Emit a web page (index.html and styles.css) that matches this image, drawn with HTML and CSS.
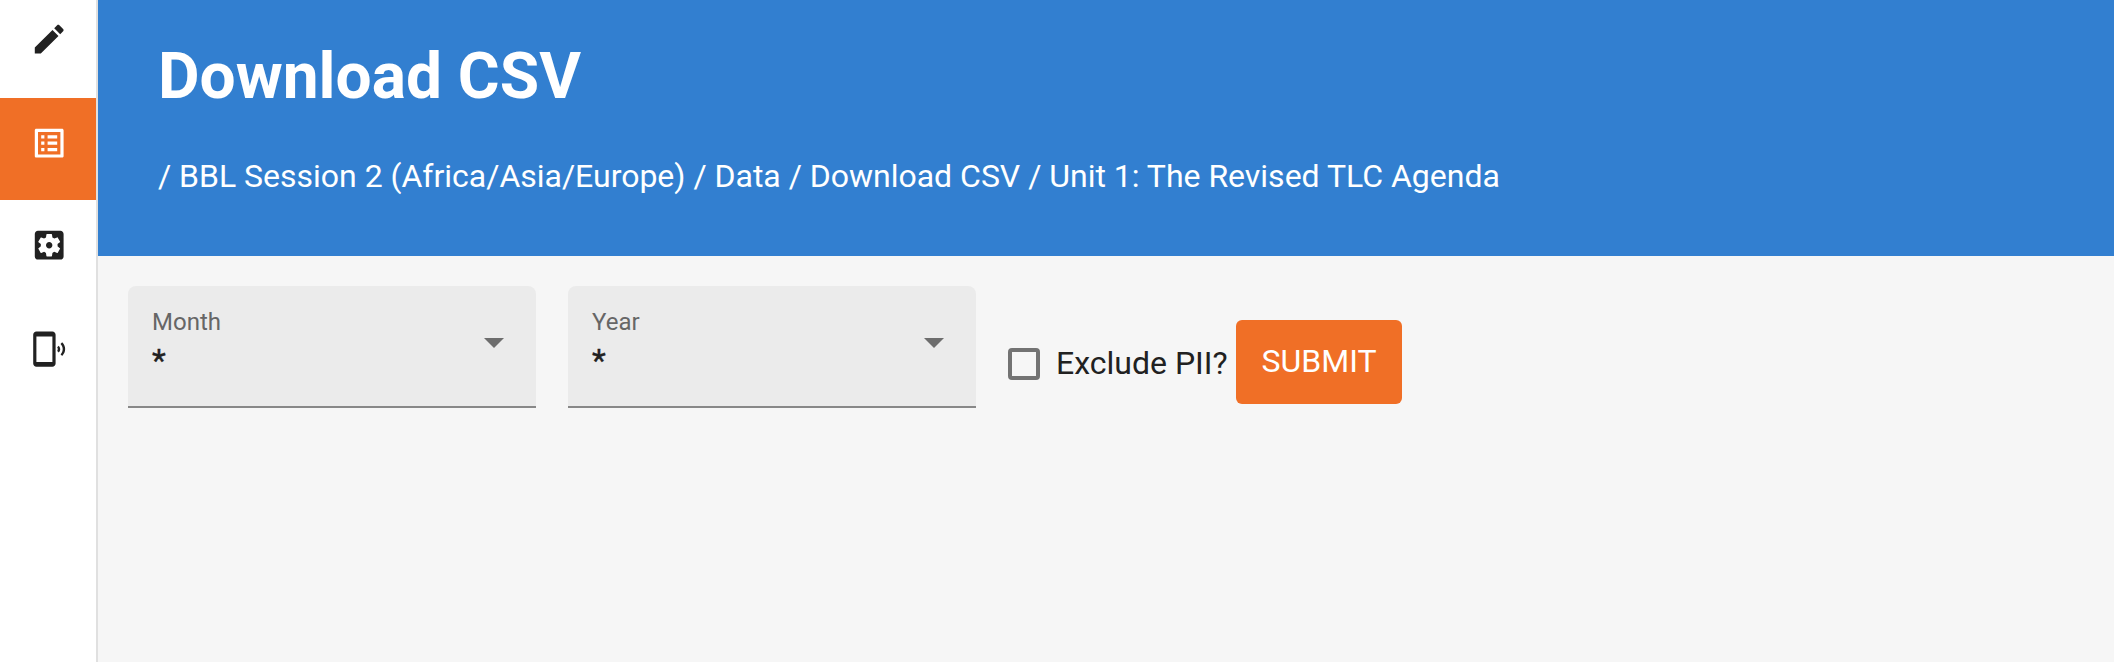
FILE: index.html
```html
<!DOCTYPE html>
<html lang="en">
<head>
<meta charset="utf-8">
<title>Download CSV</title>
<link rel="stylesheet" href="styles.css">
</head>
<body>
<div class="app">
  <nav class="sidebar">
    <a class="nav-item nav-first"><svg class="icon" viewBox="0 0 24 24"><path d="M3 17.25V21h3.75L17.81 9.94l-3.75-3.75L3 17.25zM20.71 7.04c.39-.39.39-1.02 0-1.41l-2.34-2.34c-.39-.39-1.02-.39-1.41 0l-1.83 1.83 3.75 3.75 1.83-1.83z"/></svg></a>
    <a class="nav-item nav-active"><svg class="icon" viewBox="0 0 24 24"><path d="M19 5v14H5V5h14m1.1-2H3.9c-.5 0-.9.4-.9.9v16.2c0 .4.4.9.9.9h16.2c.4 0 .9-.5.9-.9V3.9c0-.5-.5-.9-.9-.9zM11 7h6v2h-6V7zm0 4h6v2h-6v-2zm0 4h6v2h-6zM7 7h2v2H7zm0 4h2v2H7zm0 4h2v2H7z"/></svg></a>
    <a class="nav-item nav-settings"><svg class="icon" viewBox="0 0 24 24"><path d="M12 10c-1.1 0-2 .9-2 2s.9 2 2 2 2-.9 2-2-.9-2-2-2zm7-7H5c-1.11 0-2 .9-2 2v14c0 1.1.89 2 2 2h14c1.11 0 2-.9 2-2V5c0-1.1-.89-2-2-2zm-1.75 9c0 .23-.02.46-.05.68l1.48 1.16c.13.11.17.3.08.45l-1.4 2.42c-.09.15-.27.21-.43.15l-1.74-.7c-.36.28-.76.51-1.18.69l-.26 1.85c-.03.17-.18.3-.35.3h-2.8c-.17 0-.32-.13-.35-.29l-.26-1.85c-.43-.18-.82-.41-1.18-.69l-1.74.7c-.16.06-.34 0-.43-.15l-1.4-2.42c-.09-.15-.05-.34.08-.45l1.48-1.16c-.03-.23-.05-.46-.05-.69 0-.23.02-.46.05-.68l-1.48-1.16c-.13-.11-.17-.3-.08-.45l1.4-2.42c.09-.15.27-.21.43-.15l1.74.7c.36-.28.76-.51 1.18-.69l.26-1.85c.03-.17.18-.3.35-.3h2.8c.17 0 .32.13.35.29l.26 1.85c.43.18.82.41 1.18.69l1.74-.7c.16-.06.34 0 .43.15l1.4 2.42c.09.15.05.34-.08.45l-1.48 1.16c.03.23.05.46.05.69z"/></svg></a>
    <a class="nav-item"><svg class="icon" viewBox="0 0 24 24"><path d="M20.1 7.7l-1 1c1.8 1.8 1.8 4.6 0 6.5l1 1c2.5-2.3 2.5-6.1 0-8.5zM18 9.8l-1 1c.5.7.5 1.6 0 2.3l1 1c1.2-1.2 1.2-3 0-4.3zM14 1H4c-1.1 0-2 .9-2 2v18c0 1.1.9 2 2 2h10c1.1 0 2-.9 2-2V3c0-1.1-.9-2-2-2zm0 19H4V4h10v16z"/></svg></a>
  </nav>
  <main class="content">
    <header class="header">
      <h1 class="title">Download CSV</h1>
      <div class="breadcrumb">/ BBL Session 2 (Africa/Asia/Europe) / Data / Download CSV / Unit 1: The Revised TLC Agenda</div>
    </header>
    <form class="filters">
      <div class="field">
        <div class="field-text"><span class="field-label">Month</span><span class="field-value">*</span></div>
        <svg class="arrow" viewBox="0 0 20 10"><path d="M0 0h20L10 10z"/></svg>
      </div>
      <div class="field">
        <div class="field-text"><span class="field-label">Year</span><span class="field-value">*</span></div>
        <svg class="arrow" viewBox="0 0 20 10"><path d="M0 0h20L10 10z"/></svg>
      </div>
      <label class="check"><span class="box"></span><span class="check-label">Exclude PII?</span></label>
      <button class="submit" type="button">SUBMIT</button>
    </form>
  </main>
</div>
</body>
</html>
```

FILE: styles.css
```css
* { box-sizing: border-box; }
body {
  margin: 0;
  font-family: Roboto, "Liberation Sans", sans-serif;
  font-size: 32px;
  color: #212121;
}
.app { display: flex; height: 662px; background: #f6f6f6; overflow: hidden; }
.sidebar {
  flex: none;
  width: 98px;
  background: #fff;
  border-right: 2px solid #e0e0e0;
}
.nav-item { display: block; height: 102px; padding: 25.8px 0 0 30px; color: #212121; }
.nav-first { height: 98px; padding-top: 19.8px; }
.nav-active { background: #f06f26; color: #fff; }
.nav-settings { height: 104px; }
.icon { display: block; width: 38.4px; height: 38.4px; fill: currentColor; }
.content { flex: 1; min-width: 0; }
.header { height: 256px; padding: 39px 60px 0; background: #327fd0; color: #fff; }
.title { margin: 0; font-size: 64px; line-height: 75px; font-weight: 700; white-space: nowrap; }
.breadcrumb { margin-top: 43px; line-height: 38px; letter-spacing: -0.012px; white-space: nowrap; }
.filters { display: flex; align-items: flex-start; padding: 30px 30px 0; }
.field {
  display: flex;
  justify-content: space-between;
  width: 408px;
  height: 122px;
  margin-right: 32px;
  padding: 22px 32px 0 24px;
  background: #ebebeb;
  border-bottom: 2px solid #888;
  border-radius: 8px 8px 0 0;
}
.field-text { display: flex; flex-direction: column; }
.field-label { font-size: 24px; line-height: 28px; color: #666; }
.field-value { line-height: 38px; margin-top: 5px; -webkit-text-stroke: 0.4px currentColor; }
.arrow { width: 20px; height: 10px; margin-top: 30px; fill: #6d6d6d; }
.check { display: flex; align-items: center; height: 38px; margin-top: 59px; }
.box { width: 32px; height: 32px; border: 4px solid #737373; border-radius: 4px; }
.check-label { width: 180px; margin: 0 0 2px 16px; line-height: 38px; white-space: nowrap; }
.submit {
  width: 166px;
  height: 84px;
  margin: 34px 0 0;
  padding: 0 0 2px;
  border: 0;
  border-radius: 6px;
  background: #f06f26;
  color: #fff;
  font: 400 32px/38px Roboto, "Liberation Sans", sans-serif;
}
```
